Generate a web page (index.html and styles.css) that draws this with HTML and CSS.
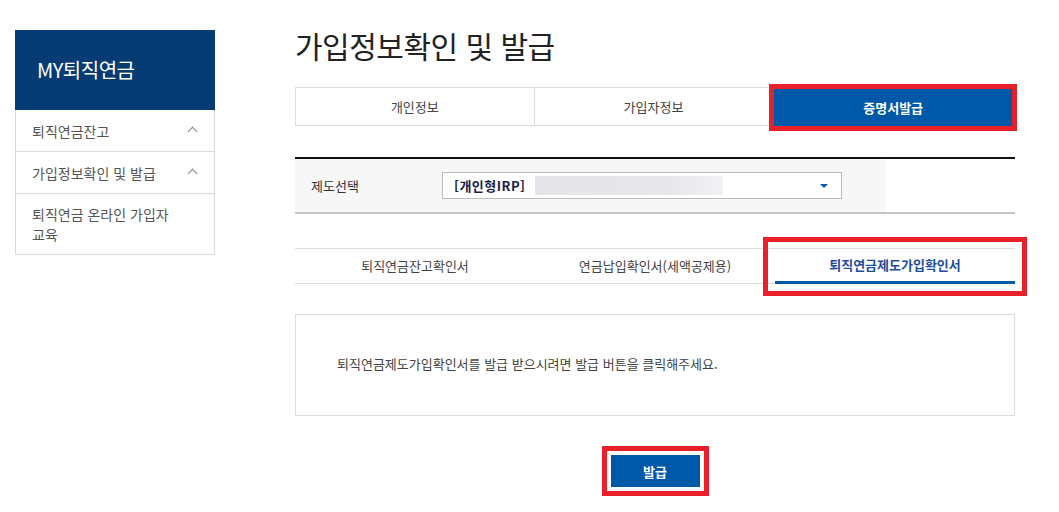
FILE: index.html
```html
<!DOCTYPE html>
<html lang="ko">

<head>
    <meta charset="UTF-8">
    <meta name="viewport" content="width=device-width, initial-scale=1.0">
    <title>가입정보확인 및 발급</title>
    <link rel="stylesheet" href="styles.css">
</head>

<body>

    <div class="wrap">
        <aside class="side">
            <div class="side-head">MY퇴직연금</div>
            <ul class="side-menu">
                <li><span>퇴직연금잔고</span><i class="chev"></i></li>
                <li><span>가입정보확인 및 발급</span><i class="chev"></i></li>
                <li><span>퇴직연금 온라인 가입자<br>교육</span></li>
            </ul>
        </aside>

        <main class="content">
            <h2 class="title">가입정보확인 및 발급</h2>

            <div class="tabs">
                <div class="tab">개인정보</div>
                <div class="tab">가입자정보</div>
                <div class="tab on mark">증명서발급</div>
            </div>

            <div class="select-row">
                <div class="select-cell">
                    <label class="select-label">제도선택</label>
                    <div class="select-box">
                        <strong>[개인형IRP]</strong>
                        <span class="blur"></span>
                        <i class="arrow"></i>
                    </div>
                </div>
            </div>

            <div class="subtabs">
                <div class="subtab">퇴직연금잔고확인서</div>
                <div class="subtab">연금납입확인서(세액공제용)</div>
                <div class="subtab on mark wide">퇴직연금제도가입확인서</div>
            </div>

            <div class="notice">
                퇴직연금제도가입확인서를 발급 받으시려면 발급 버튼을 클릭해주세요.
            </div>

            <div class="btn-area">
                <button class="btn mark wide">발급</button>
            </div>
        </main>
    </div>

</body>

</html>
```

FILE: styles.css
```css
body {
    font-family: "Noto Sans CJK KR", "Noto Sans", sans-serif;
    background-color: #fff;
    margin: 0;
    color: #333;
}

.wrap {
    display: flex;
    gap: 80px;
    padding: 30px 0 30px 15px;
}

/* left menu */
.side {
    width: 200px;
    flex-shrink: 0;
}

.side-head {
    height: 80px;
    background-color: #063b73;
    color: #fff;
    font-size: 20px;
    line-height: 80px;
    padding-left: 22px;
    letter-spacing: -0.5px;
}

.side-menu {
    list-style: none;
    margin: 0;
    padding: 0;
    border: 1px solid #d9d9de;
    border-top: none;
}

.side-menu li {
    display: flex;
    justify-content: space-between;
    align-items: center;
    padding: 10px 16px;
    min-height: 21px;
    font-size: 14px;
    line-height: 20px;
    color: #555;
    border-top: 1px solid #d9d9de;
}

.side-menu li:first-child {
    border-top: none;
}

.chev {
    width: 6px;
    height: 6px;
    border-left: 1px solid #888;
    border-top: 1px solid #888;
    transform: rotate(45deg);
    margin: 2px 2px 0 0;
}

/* main */
.content {
    width: 720px;
}

.title {
    margin: -3px 0 0;
    font-size: 30px;
    line-height: 36px;
    font-weight: normal;
    color: #222;
    letter-spacing: -0.5px;
}

.tabs {
    display: flex;
    margin-top: 24px;
    border-top: 1px solid #ddd;
    border-bottom: 1px solid #ddd;
}

.tab {
    flex: 1;
    text-align: center;
    font-size: 13px;
    line-height: 37px;
    color: #444;
    border-left: 1px solid #ddd;
}

.tab.on {
    background-color: #0058a8;
    color: #fff;
    font-weight: bold;
    margin: 1px 3px -1px 2px;
    border-left: none;
}

.mark {
    outline: 5px solid #e8202a;
}

.mark.wide {
    outline-offset: 4px;
}

.subtabs .mark.wide {
    outline-offset: 7px;
}

.select-row {
    margin-top: 31px;
    border-top: 2px solid #111;
    border-bottom: 2px solid #c4c4c4;
}

.select-cell {
    width: 590px;
    height: 53px;
    background-color: #f7f7f7;
    display: flex;
    align-items: center;
}

.select-label {
    width: 131px;
    padding-left: 16px;
    font-size: 13px;
    color: #333;
}

.select-box {
    width: 387px;
    height: 25px;
    border: 1px solid #bbb;
    background-color: #fff;
    display: flex;
    align-items: center;
    padding-left: 11px;
    position: relative;
}

.select-box strong {
    font-size: 13px;
    color: #1c1c4c;
    letter-spacing: 0.5px;
}

.blur {
    width: 188px;
    height: 19px;
    margin-left: 9px;
    background: linear-gradient(90deg, #e5e4e8 0%, #e7e6ea 70%, #f1f1f3 100%);
}

.arrow {
    position: absolute;
    right: 13px;
    top: 11px;
    border-left: 4px solid transparent;
    border-right: 4px solid transparent;
    border-top: 4px solid #0058a8;
}

.subtabs {
    display: flex;
    margin-top: 34px;
    border-top: 1px solid #ddd;
    border-bottom: 1px solid #ddd;
}

.subtab {
    flex: 1;
    text-align: center;
    font-size: 13px;
    line-height: 34px;
    color: #444;
}

.subtab.on {
    color: #1f4e9c;
    font-weight: bold;
    border-bottom: 3px solid #0058a8;
    margin-bottom: -1px;
    line-height: 32px;
}

.notice {
    margin-top: 30px;
    height: 100px;
    border: 1px solid #ddd;
    padding-left: 41px;
    font-size: 13px;
    line-height: 98px;
    color: #444;
}

.btn-area {
    text-align: center;
    margin-top: 39px;
}

.btn {
    width: 89px;
    height: 32px;
    background-color: #0058a8;
    color: #fff;
    border: none;
    font-family: inherit;
    font-size: 13px;
    font-weight: bold;
    cursor: pointer;
}
```
